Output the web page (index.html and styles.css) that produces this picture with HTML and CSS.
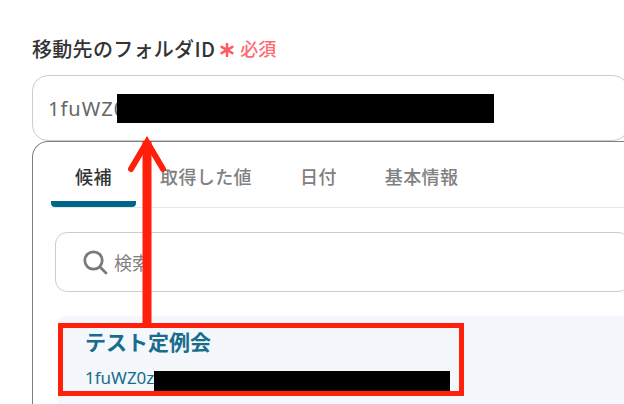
FILE: index.html
```html
<!DOCTYPE html>
<html lang="ja">
<head>
  <meta charset="UTF-8">
  <title>移動先のフォルダID</title>
  <link rel="stylesheet" href="styles.css">
</head>
<body>
  <div class="field">
    <div class="field-label">
      <span class="label-text">移動先のフォルダID</span>
      <svg class="required-mark" width="14" height="14" viewBox="0 0 14 14">
        <path d="M7 1V13M1.6 3.9L12.4 10.1M12.4 3.9L1.6 10.1" stroke="#ff5a64" stroke-width="2.5" stroke-linecap="round"/>
      </svg>
      <span class="required-text">必須</span>
    </div>
    <div class="id-input">1fuWZ0</div>
    <div class="panel">
      <div class="tabs">
        <div class="tab active">候補</div>
        <div class="tab">取得した値</div>
        <div class="tab">日付</div>
        <div class="tab">基本情報</div>
      </div>
      <div class="search">
        <svg class="search-icon" width="26" height="26" viewBox="0 0 26 26">
          <circle cx="11.5" cy="11.5" r="8.7" fill="none" stroke="#7a7a7a" stroke-width="2.8"/>
          <path d="M18 18l6 6" stroke="#7a7a7a" stroke-width="2.8" stroke-linecap="round"/>
        </svg>
        <span class="search-text">検索</span>
      </div>
      <div class="option">
        <div class="option-title">テスト定例会</div>
        <div class="option-id">1fuWZ0z</div>
      </div>
    </div>
  </div>

  <!-- annotations on top of the screenshot -->
  <div class="redact redact-input"></div>
  <div class="redact redact-option"></div>
  <div class="highlight"></div>
  <svg class="arrow" width="50" height="190" viewBox="0 0 50 190">
    <path d="M25 6V190" stroke="#ff1f0a" stroke-width="9"/>
    <path d="M9 34L25 7L41 34" fill="none" stroke="#ff1f0a" stroke-width="6" stroke-linecap="round" stroke-linejoin="miter"/>
  </svg>
</body>
</html>
```

FILE: styles.css
```css
html, body {
  margin: 0;
  height: 100%;
  overflow: hidden;
}

body {
  position: relative;
  background-color: #ffffff;
  font-family: "Noto Sans CJK JP", "Noto Sans", sans-serif;
}

.field {
  box-sizing: border-box;
  width: 629px;
  padding: 34px 0 0 32px;
}

.field-label {
  display: flex;
  align-items: center;
  height: 28px;
  margin-bottom: 13px;
}

.label-text {
  font-size: 20px;
  font-weight: 500;
  letter-spacing: 0.3px;
  color: #333333;
}

.required-mark {
  margin-left: 5px;
  margin-top: 4px;
}

.required-text {
  margin-left: 6px;
  font-size: 18px;
  font-weight: 500;
  color: #ff6a72;
}

.id-input {
  box-sizing: border-box;
  height: 66px;
  padding-left: 15px;
  display: flex;
  align-items: center;
  border: 1px solid #cccccc;
  border-radius: 16px;
  font-family: "Noto Sans", sans-serif;
  font-size: 20px;
  letter-spacing: 1px;
  color: #666666;
}

.panel {
  box-sizing: border-box;
  height: 263px;
  margin-right: -20px;
  border: 1px solid #808080;
  border-bottom: none;
  border-radius: 16px 16px 0 0;
  padding: 0 18px;
}

.tabs {
  display: flex;
  height: 65px;
  border-bottom: 1px solid #e6e6e6;
}

.tab {
  padding: 22px 24px 0;
  font-size: 18px;
  line-height: 24px;
  font-weight: 500;
  letter-spacing: 0.4px;
  color: #808080;
}

.tab.active {
  width: 85px;
  box-sizing: border-box;
  height: 65px;
  color: #333333;
  border-bottom: 6px solid #00658a;
  border-radius: 4px;
}

.search {
  box-sizing: border-box;
  display: flex;
  align-items: center;
  height: 60px;
  margin: 24px 0 24px 4px;
  padding-left: 26px;
  border: 1px solid #cccccc;
  border-radius: 12px;
}

.search-icon {
  flex-shrink: 0;
}

.search-text {
  margin-left: 6px;
  font-size: 18px;
  color: #808080;
}

.option {
  box-sizing: border-box;
  height: 88px;
  margin-left: 7px;
  padding: 9px 0 0 27px;
  background-color: #f4f7fb;
  border-radius: 8px 8px 0 0;
  color: #186c8c;
}

.option-title {
  font-size: 21px;
  font-weight: 700;
  line-height: 32px;
}

.option-id {
  margin-top: 9px;
  font-family: "Noto Sans", sans-serif;
  font-size: 17px;
  line-height: 24px;
}

.redact {
  position: absolute;
  background-color: #000000;
}

.redact-input {
  left: 117px;
  top: 94px;
  width: 377px;
  height: 29px;
}

.redact-option {
  left: 154px;
  top: 371px;
  width: 296px;
  height: 20px;
}

.highlight {
  position: absolute;
  left: 58px;
  top: 323px;
  width: 396px;
  height: 63px;
  border: 5px solid #ff1f0a;
}

.arrow {
  position: absolute;
  left: 122px;
  top: 135px;
}
```
